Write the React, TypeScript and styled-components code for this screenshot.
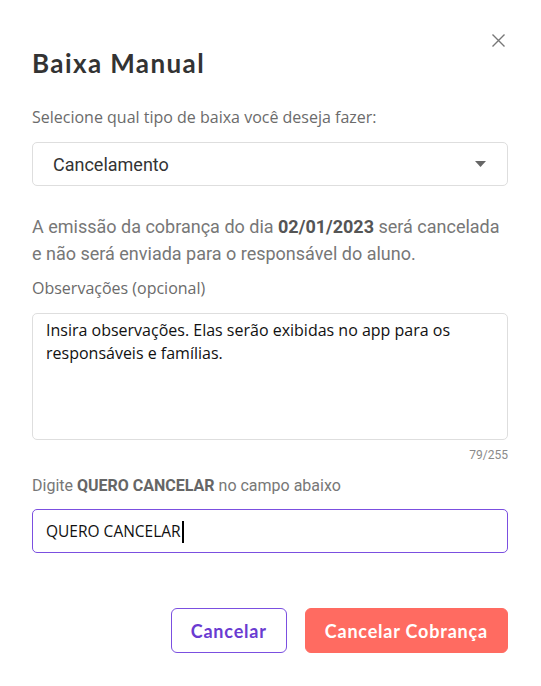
import React from "react";
import styled, { createGlobalStyle } from "styled-components";

const GlobalStyle = createGlobalStyle`
  * { box-sizing: border-box; }
  html, body { margin: 0; padding: 0; background: #ffffff; }
  body { font-family: "Roboto", "Liberation Sans", sans-serif; }
`;

const Dialog = styled.div`
  position: relative;
  width: 541px;
  min-height: 686px;
  padding: 47px 33px 0 32px;
  display: flex;
  flex-direction: column;
  background: #ffffff;
`;

const CloseButton = styled.button`
  position: absolute;
  top: 34px;
  right: 36px;
  width: 13px;
  height: 13px;
  padding: 0;
  border: 0;
  background: none;
  display: flex;
  cursor: pointer;
`;

const Title = styled.h2`
  margin: 0;
  font-family: "Lato", "Liberation Sans", sans-serif;
  font-weight: 700;
  font-size: 26px;
  line-height: 32px;
  letter-spacing: 1.4px;
  color: #333333;
`;

const Label = styled.label<{ $gap: number }>`
  display: block;
  margin-top: ${(p) => p.$gap}px;
  font-family: "Open Sans", "Liberation Sans", sans-serif;
  font-size: 16px;
  line-height: 24px;
  color: #6b6b6b;
`;

const SelectBox = styled.button`
  margin-top: 13px;
  height: 44px;
  width: 100%;
  display: flex;
  align-items: center;
  justify-content: space-between;
  padding: 0 21px 0 20px;
  border: 1px solid #dedede;
  border-radius: 5px;
  background: #ffffff;
  font-family: "Roboto", "Liberation Sans", sans-serif;
  font-size: 18px;
  color: #333333;
  text-align: left;
`;

const Notice = styled.p`
  margin: 27px 0 0;
  font-family: "Roboto", "Liberation Sans", sans-serif;
  font-size: 18px;
  line-height: 27px;
  color: #777777;

  strong {
    font-weight: 700;
    color: #555555;
  }
`;

const TextArea = styled.textarea`
  margin-top: 13px;
  width: 100%;
  height: 127px;
  resize: none;
  padding: 5px 13px;
  border: 1px solid #dedede;
  border-radius: 5px;
  font-family: "Open Sans", "Liberation Sans", sans-serif;
  font-size: 16px;
  line-height: 23px;
  color: #111111;
  outline: none;
`;

const Counter = styled.div`
  margin-top: 7px;
  text-align: right;
  font-family: "Roboto", "Liberation Sans", sans-serif;
  font-size: 12px;
  line-height: 16px;
  color: #8a8a8a;
`;

const Hint = styled.div`
  margin-top: 11px;
  font-family: "Roboto", "Liberation Sans", sans-serif;
  font-size: 16px;
  line-height: 24px;
  color: #777777;

  strong {
    font-weight: 700;
    color: #666666;
  }
`;

const InputWrap = styled.div`
  position: relative;
  margin-top: 11px;
`;

const ConfirmInput = styled.input`
  display: block;
  width: 100%;
  height: 44px;
  padding: 0 13px;
  border: 1px solid #7b4fe0;
  border-radius: 5px;
  font-family: "Open Sans", "Liberation Sans", sans-serif;
  font-size: 15.5px;
  color: #111111;
  caret-color: transparent;
  outline: none;
`;

const Caret = styled.span`
  position: absolute;
  left: 150px;
  top: 12px;
  width: 2px;
  height: 22px;
  background: #000000;
  pointer-events: none;
`;

const Footer = styled.div`
  margin-top: 55px;
  display: flex;
  justify-content: flex-end;
  gap: 18px;
`;

const Button = styled.button<{ $variant: "outline" | "danger" }>`
  height: 45px;
  padding: 0 19px;
  border-radius: 6px;
  font-family: "Lato", "Liberation Sans", sans-serif;
  font-weight: 700;
  font-size: 18px;
  letter-spacing: 0.8px;
  cursor: pointer;
  border: 1px solid ${(p) => (p.$variant === "outline" ? "#7b4fe0" : "#ff6b61")};
  background: ${(p) => (p.$variant === "outline" ? "#ffffff" : "#ff6b61")};
  color: ${(p) => (p.$variant === "outline" ? "#6a3bd1" : "#ffffff")};
`;

export default function App() {
  return (
    <>
      <GlobalStyle />
      <Dialog>
        <CloseButton aria-label="Fechar">
          <svg width="13" height="13" viewBox="0 0 13 13">
            <path d="M0.5 0.5 L12.5 12.5 M12.5 0.5 L0.5 12.5" stroke="#777" strokeWidth="1.4" />
          </svg>
        </CloseButton>
        <Title>Baixa Manual</Title>
        <Label $gap={26}>Selecione qual tipo de baixa você deseja fazer:</Label>
        <SelectBox>
          <span>Cancelamento</span>
          <svg width="11" height="6" viewBox="0 0 11 6">
            <path d="M0 0 H11 L5.5 6 Z" fill="#666" />
          </svg>
        </SelectBox>
        <Notice>
          A emissão da cobrança do dia <strong>02/01/2023</strong> será cancelada e não será
          enviada para o responsável do aluno.
        </Notice>
        <Label $gap={9}>Observações (opcional)</Label>
        <TextArea
          spellCheck={false}
          defaultValue="Insira observações. Elas serão exibidas no app para os responsáveis e famílias."
        />
        <Counter>79/255</Counter>
        <Hint>
          Digite <strong>QUERO CANCELAR</strong> no campo abaixo
        </Hint>
        <InputWrap>
          <ConfirmInput defaultValue="QUERO CANCELAR" />
          <Caret />
        </InputWrap>
        <Footer>
          <Button $variant="outline">Cancelar</Button>
          <Button $variant="danger">Cancelar Cobrança</Button>
        </Footer>
      </Dialog>
    </>
  );
}
